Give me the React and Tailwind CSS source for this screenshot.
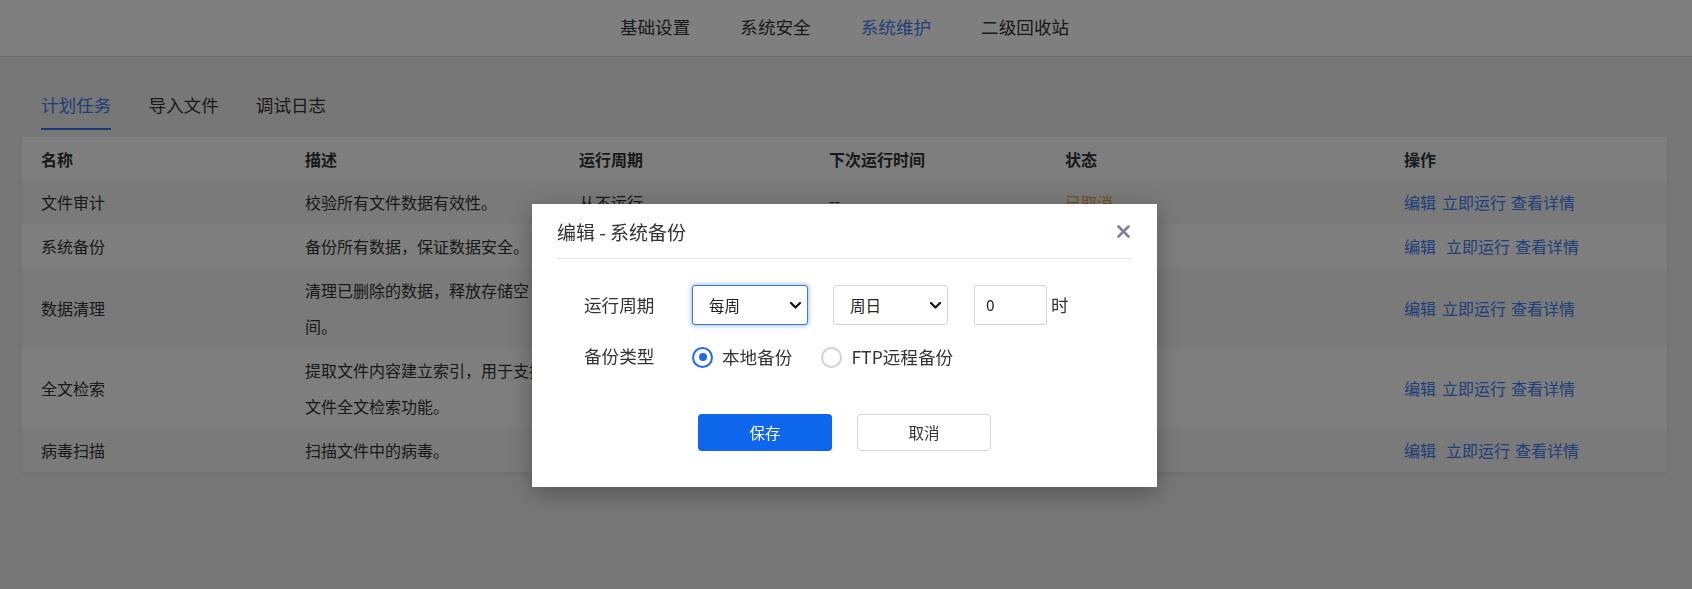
import React from 'react'

const navItems = ['基础设置', '系统安全', '系统维护', '二级回收站']
const tabs = ['计划任务', '导入文件', '调试日志']

const tasks = [
  { name: '文件审计', desc: '校验所有文件数据有效性。', cycle: '从不运行', next: '--', status: '已取消', gap: false },
  { name: '系统备份', desc: '备份所有数据，保证数据安全。', cycle: '每周日 0 时', next: '--', status: '正常', gap: true },
  { name: '数据清理', desc: '清理已删除的数据，释放存储空间。', cycle: '每天 2 时', next: '--', status: '正常', gap: false },
  { name: '全文检索', desc: '提取文件内容建立索引，用于支持文件全文检索功能。', cycle: '每天 3 时', next: '--', status: '正常', gap: false },
  { name: '病毒扫描', desc: '扫描文件中的病毒。', cycle: '从不运行', next: '--', status: '正常', gap: true },
]

const Chevron = () => (
  <svg width="11" height="7" viewBox="0 0 11 7" fill="none">
    <path d="M1 1l4.5 4.5L10 1" stroke="#111" strokeWidth="2.2" strokeLinecap="round" strokeLinejoin="round" />
  </svg>
)

const SelectBox = ({ value, focused, width }) => (
  <div
    className={`flex items-center justify-between h-[40px] pl-[16px] pr-[6px] bg-white rounded-[3px] text-[15.5px] leading-[20px] text-[#222] ${width} ${
      focused
        ? 'border border-[#3b78d8] shadow-[0_0_4px_1px_rgba(59,120,216,0.45)]'
        : 'border border-[#d4d4d4]'
    }`}
  >
    <span>{value}</span>
    <Chevron />
  </div>
)

const Radio = ({ checked, label }) => (
  <div className="flex items-center">
    {checked ? (
      <span className="w-[21px] h-[21px] rounded-full border-2 border-[#1f6be6] flex items-center justify-center">
        <span className="w-[8px] h-[8px] rounded-full bg-[#1f6be6]" />
      </span>
    ) : (
      <span className="w-[21px] h-[21px] rounded-full border-2 border-[#d2d2d2]" />
    )}
    <span className="ml-[9px] text-[17.6px] leading-[22px] text-[#333]">{label}</span>
  </div>
)

export default function App() {
  return (
    <div
      className="relative min-h-[589px] bg-[#eeeeee] text-[#333]"
      style={{ fontFamily: '"Noto Sans CJK SC", "Noto Sans", sans-serif' }}
    >
      {/* Top nav */}
      <div className="h-[57px] bg-white border-b border-[#dcdcdc] flex items-center justify-center gap-[50px] pb-[3px] pr-[3px]">
        {navItems.map((item, i) => (
          <span
            key={item}
            className={`text-[17.6px] leading-[24px] ${i === 2 ? 'text-[#3d7ef0]' : 'text-[#333]'}`}
          >
            {item}
          </span>
        ))}
      </div>

      <div className="pl-[22px] pr-[25px]">
        {/* Tabs */}
        <div className="flex gap-[37px] ml-[19px] mt-[36px]">
          {tabs.map((t, i) => (
            <div
              key={t}
              className={`text-[17.6px] leading-[24px] pb-[11px] border-b-2 ${
                i === 0 ? 'text-[#3d7ef0] border-[#3572e6]' : 'text-[#333] border-transparent'
              }`}
            >
              {t}
            </div>
          ))}
        </div>

        {/* Table */}
        <table className="mt-[7px] w-full table-fixed border-collapse bg-white shadow-[0_2px_4px_rgba(0,0,0,0.06)] text-[16px]">
          <colgroup>
            <col className="w-[264px]" />
            <col className="w-[274px]" />
            <col className="w-[250px]" />
            <col className="w-[236px]" />
            <col className="w-[339px]" />
            <col className="w-[282px]" />
          </colgroup>
          <thead>
            <tr className="bg-[#fdfdfd] text-left">
              {['名称', '描述', '运行周期', '下次运行时间', '状态', '操作'].map((h) => (
                <th key={h} className="pl-[19px] py-[3.5px] leading-[36px] font-bold text-[#333]">
                  {h}
                </th>
              ))}
            </tr>
          </thead>
          <tbody>
            {tasks.map((t, i) => (
              <tr key={t.name} className={i % 2 === 0 ? 'bg-[#f4f4f4]' : 'bg-[#fdfdfd]'}>
                <td className="pl-[19px] py-[4px] leading-[36px] align-middle">{t.name}</td>
                <td className="pl-[19px] pr-[7px] py-[4px] leading-[36px] align-middle">{t.desc}</td>
                <td className="pl-[19px] py-[4px] leading-[36px] align-middle">{t.cycle}</td>
                <td className="pl-[19px] pb-[6px] pt-[2px] leading-[36px] align-middle">{t.next}</td>
                <td
                  className={`pl-[19px] py-[4px] leading-[36px] align-middle ${
                    t.status === '已取消' ? 'text-[#e6a23c]' : 'text-[#333]'
                  }`}
                >
                  {t.status}
                </td>
                <td className="pl-[19px] py-[4px] leading-[36px] align-middle text-[#3d7ef0] whitespace-nowrap">
                  <a className={t.gap ? 'mr-[10px]' : 'mr-[6px]'}>编辑</a>
                  <a className="mr-[5px]">立即运行</a>
                  <a>查看详情</a>
                </td>
              </tr>
            ))}
          </tbody>
        </table>
      </div>

      {/* Overlay + dialog */}
      <div className="fixed inset-0 bg-black/50 flex justify-center pt-[204px] pr-[3px]">
        <div className="w-[625px] h-[283px] bg-white shadow-[0_6px_24px_rgba(0,0,0,0.3)] px-[25px]">
          <div className="h-[55px] flex items-center justify-between border-b border-[#e3e3e3] pt-[1px]">
            <span className="text-[19px] leading-[26px] text-[#333]">编辑 - 系统备份</span>
            <svg width="13" height="13" viewBox="0 0 13 13" className="mr-[2px]">
              <path d="M1.5 1.5l10 10M11.5 1.5l-10 10" stroke="#7b8496" strokeWidth="2.6" strokeLinecap="round" />
            </svg>
          </div>

          <div className="pl-[27px] pt-[26px]">
            <div className="flex items-center h-[40px]">
              <span className="w-[108px] text-[17.6px] leading-[24px]">运行周期</span>
              <SelectBox value="每周" focused width="w-[116px]" />
              <div className="ml-[25px]">
                <SelectBox value="周日" width="w-[115px]" />
              </div>
              <div className="ml-[26px] w-[73px] h-[40px] border border-[#d4d4d4] rounded-[2px] flex items-center pl-[11px] text-[15.5px] text-[#222]">
                0
              </div>
              <span className="ml-[4px] text-[17.6px] leading-[24px]">时</span>
            </div>

            <div className="flex items-center h-[22px] mt-[21px]">
              <span className="w-[108px] text-[17.6px] leading-[22px] -mt-[3px]">备份类型</span>
              <Radio checked label="本地备份" />
              <div className="ml-[29px]">
                <Radio label="FTP远程备份" />
              </div>
            </div>
          </div>

          <div className="flex justify-center gap-[25px] mt-[46px]">
            <button className="w-[134px] h-[37px] rounded-[4px] bg-[#0d66eb] text-white text-[15.5px]">保存</button>
            <button className="w-[134px] h-[37px] rounded-[4px] bg-white border border-[#d4d4d4] text-[#333] text-[15.5px]">
              取消
            </button>
          </div>
        </div>
      </div>
    </div>
  )
}
